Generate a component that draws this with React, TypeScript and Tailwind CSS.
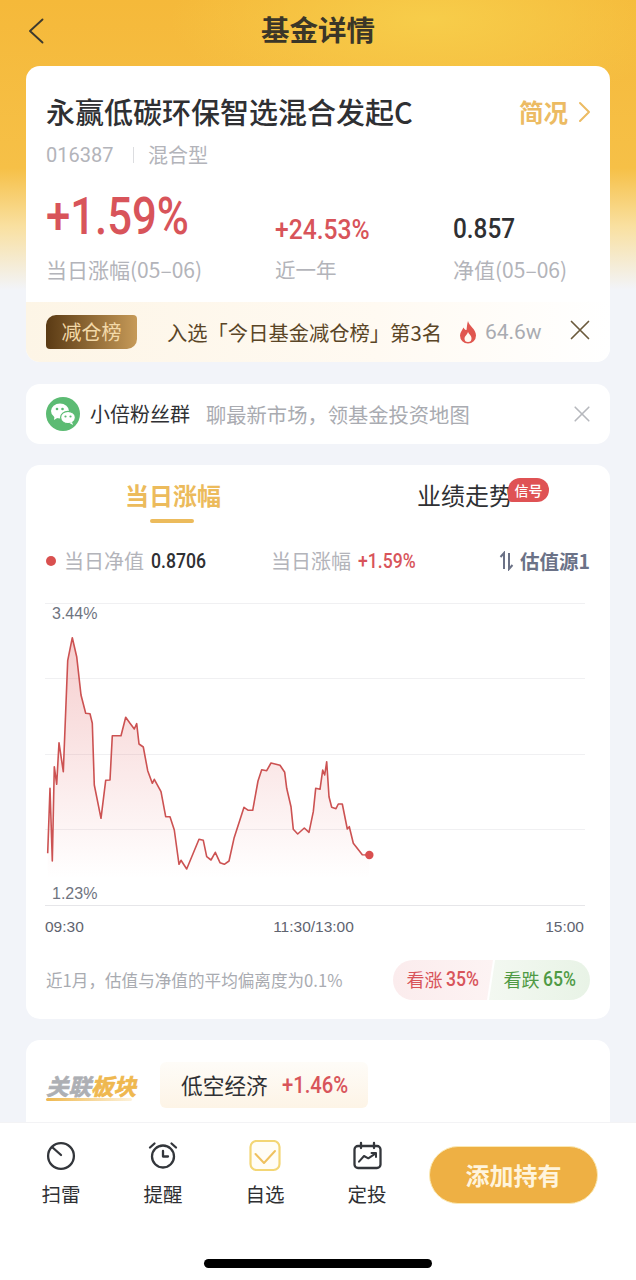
const cjk = "font-['Noto_Sans_CJK_SC','Noto_Sans',sans-serif]";
const num = "font-['Roboto','Noto_Sans_CJK_SC',sans-serif]";
const helv = "font-['Liberation_Sans',Arial,sans-serif]";

// chart points, measured off the reference at 3x
const raw = [
  [53, 775], [60, 580], [67, 798], [73, 515], [80, 568], [87, 443], [100, 530], [113, 197], [127, 128], [140, 185],
  [153, 300], [167, 355], [180, 356], [187, 385], [193, 570], [213, 670], [227, 556], [240, 555], [247, 422], [273, 422],
  [287, 367], [300, 385], [313, 402], [320, 386], [327, 447], [340, 456], [353, 527], [367, 565], [373, 553], [393, 590],
  [407, 665], [420, 665], [433, 705], [447, 808], [453, 796], [470, 822], [507, 733], [520, 736], [530, 785], [543, 795],
  [556, 772], [570, 803], [583, 808], [597, 798], [612, 730], [642, 637], [655, 646], [668, 646], [684, 558], [695, 524],
  [710, 527], [723, 504], [750, 511], [764, 532], [770, 580], [783, 635], [790, 703], [803, 717], [823, 699], [837, 712],
  [850, 650], [857, 580], [870, 583], [878, 525], [884, 540], [890, 500], [897, 605], [905, 637], [918, 641], [925, 627],
  [937, 627], [952, 702], [958, 695], [970, 745], [997, 779], [1018, 780],
];
const pts = raw.map(([x, y]) => [x / 3 - 15, y / 3 - 7]);
const line = pts.map(([x, y]) => `${x.toFixed(1)},${y.toFixed(1)}`).join(" ");
const area = `${pts[0][0]},303 ${line} ${pts[pts.length - 1][0]},303`;
const last = pts[pts.length - 1];

function Close({ size, color, width }: { size: number; color: string; width: number }) {
  return (
    <svg width={size} height={size} viewBox="0 0 20 20" fill="none" stroke={color} strokeWidth={width} strokeLinecap="round">
      <path d="M1.5 1.5 L18.5 18.5 M18.5 1.5 L1.5 18.5" />
    </svg>
  );
}

function Chart() {
  return (
    <div className="relative mt-[25px] ml-[19px] h-[306px] w-[540px]">
      <svg width="540" height="306" viewBox="0 0 540 306" fill="none">
        <defs>
          <linearGradient id="fill" x1="0" y1="0" x2="0" y2="1">
            <stop offset="0" stopColor="#e05a5a" stopOpacity="0.3" />
            <stop offset="0.9" stopColor="#e05a5a" stopOpacity="0" />
          </linearGradient>
        </defs>
        {[1.5, 76.5, 152.5, 227.5].map((y) => (
          <line key={y} x1="0" x2="540" y1={y} y2={y} stroke="#f0f0f2" strokeWidth="1" />
        ))}
        <line x1="0" x2="540" y1="303.5" y2="303.5" stroke="#e6e6e9" strokeWidth="1" />
        <polygon points={area} fill="url(#fill)" />
        <polyline points={line} stroke="#cc5252" strokeWidth="1.6" strokeLinejoin="round" />
        <circle cx={last[0]} cy={last[1]} r="4.2" fill="#d94f4f" />
      </svg>
      <span className={`absolute left-[7px] top-[3px] text-[16px] leading-[18px] text-[#6f7480] ${helv}`}>3.44%</span>
      <span className={`absolute left-[7px] top-[283px] text-[16px] leading-[18px] text-[#6f7480] ${helv}`}>1.23%</span>
    </div>
  );
}

function TabIcon({ name }: { name: string }) {
  if (name === "scan") {
    return (
      <svg width="32" height="32" viewBox="0 0 32 32" fill="none" stroke="#33363b" strokeWidth="2.3" strokeLinecap="round">
        <circle cx="16" cy="16" r="12.9" />
        <path d="M7 7 L16 15" />
      </svg>
    );
  }
  if (name === "alarm") {
    return (
      <svg width="32" height="32" viewBox="0 0 32 32" fill="none" stroke="#33363b" strokeWidth="2.3" strokeLinecap="round" strokeLinejoin="round">
        <circle cx="16" cy="16.5" r="11" />
        <path d="M16 11 V16.5 H21" />
        <path d="M3 7.5 L7.5 3.5 M29 7.5 L24.5 3.5" />
      </svg>
    );
  }
  if (name === "check") {
    return (
      <svg width="32" height="32" viewBox="0 0 32 32" fill="none" strokeLinecap="round" strokeLinejoin="round">
        <rect x="1.5" y="1" width="29" height="29" rx="6" fill="#fffdf6" stroke="#f3d675" strokeWidth="2.2" />
        <path d="M6.5 14 L15 23 L26 11" stroke="#efc15f" strokeWidth="2" />
      </svg>
    );
  }
  return (
    <svg width="32" height="32" viewBox="0 0 32 32" fill="none" stroke="#33363b" strokeWidth="2.3" strokeLinecap="round" strokeLinejoin="round">
      <rect x="3.5" y="6" width="26" height="22" rx="3.5" />
      <path d="M10 3 V8 M23 3 V8" />
      <path d="M8 21.7 L13 16 L17.3 18.3 L24.7 13.3 M20.5 13 H25 V17" strokeWidth="2" />
    </svg>
  );
}

const tabs = [
  { key: "scan", label: "扫雷" },
  { key: "alarm", label: "提醒" },
  { key: "check", label: "自选" },
  { key: "plan", label: "定投" },
];

export default function App() {
  return (
    <div className={`relative flex h-[1280px] w-[636px] flex-col overflow-hidden bg-[#f2f4f9] ${cjk}`}>
      {/* yellow wash behind the first card */}
      <div className="absolute inset-x-0 top-0 h-[290px] bg-[radial-gradient(ellipse_260px_90px_at_430px_20px,#f7cd4a_0%,rgba(247,205,74,0)_100%),linear-gradient(180deg,#f5b93a_0%,#f6c047_58%,#f9e0a0_78%,#f2f4f9_100%)]" />

      <div className="relative flex min-h-0 flex-1 flex-col">
        <header className="relative flex h-[66px] shrink-0 items-center justify-center pb-[8px]">
          <svg width="16" height="26" viewBox="0 0 16 26" fill="none" stroke="#3d3a2e" strokeWidth="1.9" strokeLinecap="round" strokeLinejoin="round" className="absolute left-[28px] top-[18px]">
            <path d="M14.5 1.5 L2 13 L14.5 24.5" />
          </svg>
          <h1 className="text-[28.5px] font-bold leading-none text-[#3b3628]">基金详情</h1>
        </header>

        <div className="flex flex-col gap-[21px] px-[26px]">
          {/* fund summary */}
          <section className="overflow-hidden rounded-[14px] bg-white">
            <div className="flex items-center justify-between pl-[20px] pr-[19px] pt-[25px]">
              <h2 className="text-[29px] font-medium leading-[40px] text-[#2f3033]">永赢低碳环保智选混合发起C</h2>
              <div className="flex translate-y-[1px] items-center text-[24.5px] font-bold leading-[40px] text-[#ecbb63]">
                简况
                <svg width="13" height="22" viewBox="0 0 13 22" fill="none" stroke="#ecbb63" strokeWidth="2" strokeLinecap="round" strokeLinejoin="round" className="ml-[10px]">
                  <path d="M2 2 L11 11 L2 20" />
                </svg>
              </div>
            </div>
            <div className="mt-[10px] flex items-center pl-[20px] text-[20px] leading-[28px] text-[#b3b4ba]">
              <span className={`w-[67px] ${num}`}>016387</span>
              <span className="ml-[20px] mr-[14px] h-[16px] w-px bg-[#dcdde0]" />
              <span>混合型</span>
            </div>
            <div className="mt-[9px] flex pl-[20px]">
              <div className="w-[229px]">
                <div className={`flex h-[77px] items-center text-[52px] font-medium leading-[60px] text-[#d8545a] ${num}`}>
                  <span className="inline-block origin-left scale-x-[.84]">+1.59%</span>
                </div>
                <div className="text-[21px] leading-[28px] text-[#b3b4ba]">当日涨幅(05–06)</div>
              </div>
              <div className="w-[178px]">
                <div className={`flex h-[77px] items-center pt-[27px] text-[28px] font-medium leading-[40px] text-[#d8545a] ${num}`}>
                  <span className="inline-block origin-left scale-x-[.88]">+24.53%</span>
                </div>
                <div className="text-[20.5px] leading-[28px] text-[#b3b4ba]">近一年</div>
              </div>
              <div>
                <div className={`flex h-[77px] items-center pt-[25px] text-[28px] font-medium leading-[40px] text-[#2f3033] ${num}`}>
                  <span className="inline-block origin-left scale-x-[.87]">0.857</span>
                </div>
                <div className="text-[21px] leading-[28px] text-[#b3b4ba]">净值(05–06)</div>
              </div>
            </div>
            <div className="mt-[19px] flex h-[60px] items-center bg-[linear-gradient(90deg,#fdf5e6_0%,#fffaf2_60%,#ffffff_100%)] pl-[20px] pr-[20px]">
              <span className="flex h-[34px] w-[91px] items-center justify-center rounded-tl-[10px] rounded-br-[10px] rounded-tr-[4px] rounded-bl-[4px] bg-[linear-gradient(90deg,#5a3a14_0%,#c69a58_100%)] text-[20px] leading-none text-[#f3d9a8]">减仓榜</span>
              <span className="ml-[30px] text-[20.3px] leading-none text-[#5a4526]">入选「今日基金减仓榜」第3名</span>
              <svg width="20" height="24" viewBox="0 0 20 24" className="ml-[16px]">
                <path d="M10 1 C11 6 18 9 18 15.5 A8 8 0 0 1 2 15.5 C2 12 4.5 10 5.5 7.5 C6.5 9.5 7.5 10 8.5 10 C9 7 9 4 10 1 Z" fill="#e0564f" />
                <path d="M10 12 C11 14.5 13.5 15.5 13.5 18.5 A3.5 3.5 0 0 1 6.5 18.5 C6.5 16 9 15 10 12 Z" fill="#fffaf2" />
              </svg>
              <span className={`ml-[7px] text-[21px] leading-none text-[#a9abb1] ${num}`}>64.6w</span>
              <div className="ml-auto -mt-[4px]">
                <Close size={20} color="#6b5a3c" width={1.7} />
              </div>
            </div>
          </section>

          {/* wechat group */}
          <section className="mt-px flex h-[60px] items-center rounded-[14px] bg-white pl-[20px] pr-[20px]">
            <svg width="34" height="34" viewBox="0 0 34 34">
              <circle cx="17" cy="17" r="17" fill="#5cbb73" />
              <ellipse cx="14" cy="14" rx="9" ry="7.6" fill="#fff" />
              <path d="M8.5 19 L8 23 L12 20.5 Z" fill="#fff" />
              <ellipse cx="22" cy="20.5" rx="7.4" ry="6.2" fill="#fff" stroke="#5cbb73" strokeWidth="1.2" />
              <path d="M26 25 L27 28 L23.5 26 Z" fill="#fff" />
              <circle cx="11" cy="12" r="1.3" fill="#5cbb73" />
              <circle cx="16.5" cy="12" r="1.3" fill="#5cbb73" />
              <circle cx="19.5" cy="19.5" r="1.1" fill="#5cbb73" />
              <circle cx="24.5" cy="19.5" r="1.1" fill="#5cbb73" />
            </svg>
            <span className="ml-[10px] text-[20px] leading-none text-[#2f3033]">小倍粉丝群</span>
            <span className="ml-[16px] text-[20.3px] leading-none text-[#a9abb1]">聊最新市场，领基金投资地图</span>
            <div className="ml-auto">
              <Close size={16} color="#b6b8bd" width={2} />
            </div>
          </section>

          {/* chart card */}
          <section className="h-[554px] rounded-[14px] bg-white">
            <div className="relative flex h-[66px]">
              <div className="absolute left-[99px] top-[13px] text-[24px] font-bold leading-[34px] text-[#ecbb5c]">当日涨幅</div>
              <div className="absolute left-[124px] top-[54px] h-[4px] w-[44px] rounded-full bg-[#ecbb5c]" />
              <div className="absolute left-[391px] top-[13px] text-[24px] leading-[34px] text-[#2f3033]">业绩走势</div>
              <div className="absolute left-[482px] top-[13px] flex h-[24px] w-[41px] items-center justify-center rounded-[12px] rounded-bl-[4px] bg-[#df5254] text-[14px] font-medium leading-none text-white">信号</div>
            </div>
            <div className="mt-[14px] flex h-[32px] items-center pl-[20px] pr-[20px]">
              <span className="h-[10px] w-[10px] rounded-full bg-[#d9504f]" />
              <span className="ml-[8px] text-[20px] leading-none text-[#b3b4ba]">当日净值</span>
              <span className={`ml-[7px] w-[53px] whitespace-nowrap text-[21px] font-medium leading-none text-[#2f3033] ${num}`}>
                <span className="inline-block origin-left scale-x-[.84]">0.8706</span>
              </span>
              <span className="ml-[67px] text-[20px] leading-none text-[#b3b4ba]">当日涨幅</span>
              <span className={`ml-[7px] w-[57px] whitespace-nowrap text-[20px] font-medium leading-none text-[#d8545a] ${num}`}>
                <span className="inline-block origin-left scale-x-[.88]">+1.59%</span>
              </span>
              <div className="ml-auto flex items-center text-[19.5px] font-bold leading-none text-[#6b7287]">
                <svg width="15" height="20" viewBox="0 0 15 20" fill="none" stroke="#6b7287" strokeWidth="2" className="mr-[6px]">
                  <path d="M5 18 V2 L1.5 6" />
                  <path d="M10 2 V18 L13.5 14" />
                </svg>
                估值源1
              </div>
            </div>
            <Chart />
            <div className={`ml-[19px] mt-[9px] flex w-[540px] justify-between text-[15.5px] leading-[20px] text-[#5f6470] ${helv}`}>
              <span>09:30</span>
              <span className="mr-[3px]">11:30/13:00</span>
              <span className="-translate-x-px">15:00</span>
            </div>
            <div className="mt-[23px] flex items-center justify-between pl-[20px] pr-[20px]">
              <span className="text-[16.6px] leading-none text-[#a9abb1]">近1月，估值与净值的平均偏离度为0.1%</span>
              <div className="flex h-[40px] w-[197px]">
                <div className="flex w-[100px] items-center justify-center rounded-l-[20px] bg-[linear-gradient(90deg,#fbeced,#fdf3f3)] pb-[3px] [clip-path:polygon(0_0,100%_0,94%_100%,0_100%)] text-[18px] leading-none text-[#d8545a]">
                  看涨
                  <span className={`ml-[3px] w-[34px] whitespace-nowrap text-[20px] font-medium ${num}`}>
                    <span className="inline-block origin-left scale-x-[.88]">35%</span>
                  </span>
                </div>
                <div className="-ml-[4px] flex w-[101px] items-center justify-center rounded-r-[20px] bg-[linear-gradient(90deg,#f3f8f1,#e8f3e6)] pb-[3px] pl-[1px] [clip-path:polygon(6%_0,100%_0,100%_100%,0_100%)] text-[18px] leading-none text-[#4f9a44]">
                  看跌
                  <span className={`ml-[3px] w-[34px] whitespace-nowrap text-[20px] font-medium ${num}`}>
                    <span className="inline-block origin-left scale-x-[.88]">65%</span>
                  </span>
                </div>
              </div>
            </div>
          </section>

          {/* related sector, cut by the bottom bar */}
          <section className="flex h-[120px] items-start rounded-[14px] bg-white pl-[20px] pt-[22px]">
            <div className="mt-[9px] w-[94px] whitespace-nowrap text-[22.5px] font-bold italic leading-[28px] [-webkit-text-stroke:0.7px_currentColor]">
              <span className="text-[#adafb4]">关联</span>
              <span className="text-[#efb84f]">板块</span>
              <div className="mt-[-1px] h-[3px] w-[86px] rounded-full bg-[linear-gradient(90deg,#efb84f,#fdf2da)]" />
            </div>
            <div className="ml-[20px] flex h-[46px] w-[208px] items-center rounded-[6px] bg-[linear-gradient(180deg,#fefcf8_0%,#fdf4e6_100%)] pl-[21px]">
              <span className="text-[21.7px] leading-none text-[#2f3033]">低空经济</span>
              <span className={`ml-[14px] whitespace-nowrap text-[23px] font-medium leading-none text-[#d8545a] ${num}`}>
                <span className="inline-block origin-left scale-x-[.88]">+1.46%</span>
              </span>
            </div>
          </section>
        </div>
      </div>

      {/* bottom bar */}
      <footer className="absolute inset-x-0 bottom-0 h-[158px] border-t border-[#f3f3f5] bg-white">
        <div className="flex items-start pl-[10px] pr-[38px] pt-[17px]">
          {tabs.map((t) => (
            <div key={t.key} className="flex w-[102px] flex-col items-center">
              <TabIcon name={t.key} />
              <span className="mt-[8px] text-[19.5px] leading-[28px] text-[#2f3033]">{t.label}</span>
            </div>
          ))}
          <button className="ml-auto mt-[6px] flex h-[58px] w-[169px] items-center justify-center rounded-full border border-[#fbe9b4] bg-[#eeb044] text-[24px] font-bold text-[#fff4dc]">
            添加持有
          </button>
        </div>
        <div className="absolute bottom-[12px] left-[204px] h-[9px] w-[228px] rounded-full bg-black" />
      </footer>
    </div>
  );
}
